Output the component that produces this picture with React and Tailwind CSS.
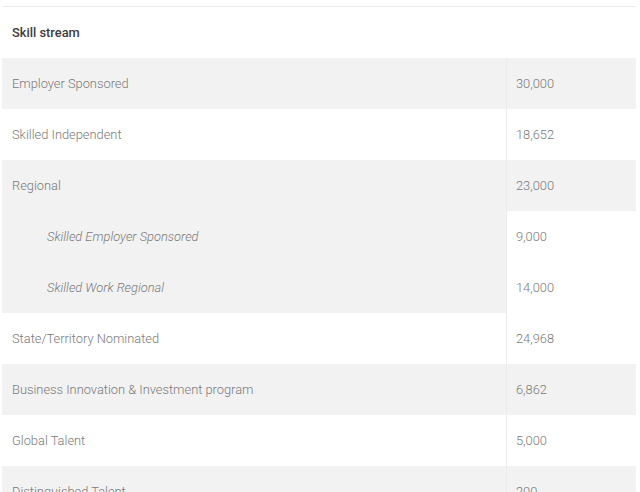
import React from 'react';

const rows = [
  { label: 'Employer Sponsored', value: '30,000', shade: true },
  { label: 'Skilled Independent', value: '18,652', shade: false },
];

const tail = [
  { label: 'State/Territory Nominated', value: '24,968', shade: false },
  { label: 'Business Innovation & Investment program', value: '6,862', shade: true },
  { label: 'Global Talent', value: '5,000', shade: false },
  { label: 'Distinguished Talent', value: '200', shade: true },
];

function Row({ label, value, shade }) {
  const bg = shade ? 'bg-[#f2f2f2]' : 'bg-white';
  return (
    <>
      <div className={'h-[51px] flex items-center pl-[10px] ' + bg}>{label}</div>
      <div className={'h-[51px] flex items-center pl-[9px] border-l border-[#ececec] ' + bg}>{value}</div>
    </>
  );
}

export default function App() {
  return (
    <div className="w-[640px] h-[492px] overflow-hidden bg-white pt-[6px] pl-[2px] text-[12.85px] font-light text-[#7a7a7a]" style={{ fontFamily: 'Roboto, "Liberation Sans", sans-serif' }}>
      <div className="w-[634px] border-t border-[#ebebeb] grid grid-cols-[504px_130px]">
        <div className="h-[51px] flex items-center pl-[10px] font-medium text-[#3c3c3c]">Skill stream</div>
        <div className="h-[51px]"></div>

        {rows.map(r => <Row key={r.label} {...r} />)}

        <div className="row-span-3 bg-[#f2f2f2] flex flex-col">
          <div className="h-[51px] flex items-center pl-[10px]">Regional</div>
          <div className="h-[51px] flex items-center pl-[45px] italic">Skilled Employer Sponsored</div>
          <div className="h-[51px] flex items-center pl-[45px] italic">Skilled Work Regional</div>
        </div>
        <div className="h-[51px] flex items-center pl-[9px] border-l border-[#ececec] bg-[#f2f2f2]">23,000</div>
        <div className="h-[51px] flex items-center pl-[9px] border-l border-[#ececec]">9,000</div>
        <div className="h-[51px] flex items-center pl-[9px] border-l border-[#ececec]">14,000</div>

        {tail.map(r => <Row key={r.label} {...r} />)}
      </div>
    </div>
  );
}
